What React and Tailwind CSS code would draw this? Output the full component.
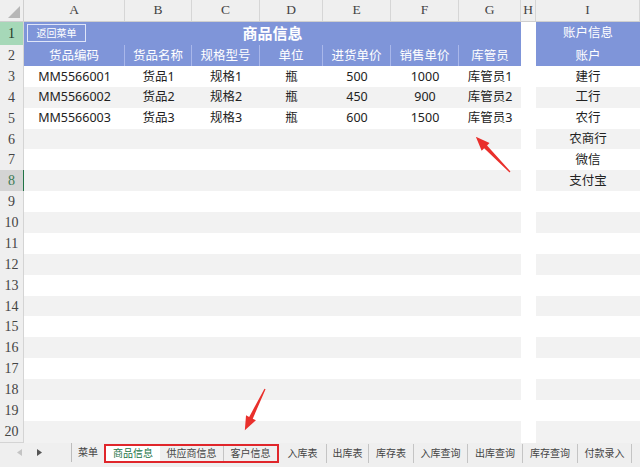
import React from 'react'

const cols = 'grid grid-cols-[24px_101px_67px_68px_63px_68px_68px_62px_15px_1fr]'
const cjk = { fontFamily: '"Noto Sans", "Noto Sans CJK SC", sans-serif' }
const serif = { fontFamily: '"Liberation Serif", "DejaVu Serif", serif' }

const letters = ['A', 'B', 'C', 'D', 'E', 'F', 'G', 'H', 'I']
const heads = ['货品编码', '货品名称', '规格型号', '单位', '进货单价', '销售单价', '库管员']
const goods = [
    ['MM5566001', '货品1', '规格1', '瓶', '500', '1000', '库管员1'],
    ['MM5566002', '货品2', '规格2', '瓶', '450', '900', '库管员2'],
    ['MM5566003', '货品3', '规格3', '瓶', '600', '1500', '库管员3'],
]
const accounts = ['建行', '工行', '农行', '农商行', '微信', '支付宝']

function RowHead({ n }) {
    let cls = 'bg-[#efefef] text-[#444] border-r border-[#d4d4d4]'
    if (n === 1) cls = 'bg-[#a6d8b8] text-[#1e3a28] border-r border-[#d4d4d4]'
    if (n === 8) cls = 'bg-[#d4d4d4] text-[#3d7a55] border-r border-r-[#217346]'
    return (
        <div className={`flex items-center justify-center border-b border-b-[#d4d4d4] text-[14px] ${cls}`} style={serif}>
            {n}
        </div>
    )
}

function Arrow({ x, y, angle, len }) {
    const h = len - 14
    return (
        <g transform={`translate(${x} ${y}) rotate(${angle})`}>
            <polygon points={`0,-0.6 ${h},-2 ${h},-5.5 ${len},0 ${h},5.5 ${h},2 0,0.6`} fill="#e9302c" />
        </g>
    )
}

const tabs = [
    ['入库表', 48], ['出库表', 42], ['库存表', 45], ['入库查询', 54],
    ['出库查询', 55], ['库存查询', 55], ['付款录入', 54],
]

export default function App() {
    const rows = []
    for (let n = 3; n <= 20; n++) {
        const i = n - 3
        const band = n % 2 === 0 ? 'bg-[#f2f2f2]' : 'bg-white'
        const g = goods[i]
        rows.push(
            <div key={n} className={`${cols} h-[20.88px] text-[12.5px] text-[#222]`} style={cjk}>
                <RowHead n={n} />
                {Array.from({ length: 7 }).map((_, c) => (
                    <div key={c} className={`flex items-center justify-center ${band}`}>{g ? g[c] : ''}</div>
                ))}
                <div className="bg-white" />
                <div className={`flex items-center justify-center ${band}`}>{accounts[i] || ''}</div>
            </div>
        )
    }

    return (
        <div className="relative h-[467px] w-[640px] overflow-hidden bg-white select-none">
            {/* column letters */}
            <div className={`${cols} h-[22px] bg-[#efefef] border-b border-[#cfcfcf]`}>
                <div className="relative border-r border-[#cfcfcf]">
                    <svg className="absolute right-[3px] bottom-[3px]" width="12" height="12" viewBox="0 0 12 12">
                        <polygon points="12,0 12,12 0,12" fill="#b7b7b7" />
                    </svg>
                </div>
                {letters.map(l => (
                    <div key={l} className="flex items-center justify-center border-r border-[#d6d6d6] text-[13.5px] text-[#444]" style={serif}>{l}</div>
                ))}
            </div>

            {/* row 1 */}
            <div className={`${cols} h-[23px]`} style={cjk}>
                <RowHead n={1} />
                <div className="col-span-7 grid grid-cols-[1fr_auto_1fr] items-center bg-[#7f95d9] border-b border-[#93a6e0]">
                    <div className="pl-[3px]">
                        <div className="flex h-[18px] w-[59px] items-center justify-center border border-[#dfe5f8] text-[10px] text-white">返回菜单</div>
                    </div>
                    <div className="text-[15px] font-bold text-white">商品信息</div>
                    <div />
                </div>
                <div className="bg-white" />
                <div className="flex items-center justify-center bg-[#7f95d9] border-b border-[#93a6e0] text-[12.5px] text-white">账户信息</div>
            </div>

            {/* row 2 */}
            <div className={`${cols} h-[20.88px] text-[12.5px] text-white`} style={cjk}>
                <RowHead n={2} />
                {heads.map((h, c) => (
                    <div key={h} className={`flex items-center justify-center bg-[#7f95d9] ${c < 6 ? 'border-r border-[#a9b7ea]' : ''}`}>{h}</div>
                ))}
                <div className="bg-white" />
                <div className="flex items-center justify-center bg-[#7f95d9]">账户</div>
            </div>

            {rows}

            {/* sheet tabs */}
            <div className="flex h-[25.3px] items-start border-t border-[#c8c8c8] bg-[#efefef] text-[10px] text-[#444]" style={cjk}>
                <div className="flex h-[19px] w-[72px] items-center border-r border-[#bdbdbd] pl-[17px] gap-[15px]">
                    <svg width="5" height="7" viewBox="0 0 5 7"><polygon points="5,0 5,7 0,3.5" fill="#c4c4c4" /></svg>
                    <svg width="5" height="7" viewBox="0 0 5 7"><polygon points="0,0 0,7 5,3.5" fill="#555" /></svg>
                </div>
                <div className="flex h-[19px] w-[32px] items-center justify-center">菜单</div>
                <div className="flex h-[19px] border-2 border-[#e0262b] mt-[1px]">
                    <div className="flex w-[54px] items-center justify-center bg-white text-[#217346]">商品信息</div>
                    <div className="flex w-[64px] items-center justify-center border-r border-[#c4c4c4]">供应商信息</div>
                    <div className="flex w-[53px] items-center justify-center">客户信息</div>
                </div>
                {tabs.map(([t, w]) => (
                    <div key={t} className="flex h-[19px] items-center justify-center border-r border-[#c4c4c4] mt-[1px]" style={{ width: w }}>{t}</div>
                ))}
            </div>

            {/* annotation arrows */}
            <svg className="pointer-events-none absolute left-0 top-0" width="640" height="467">
                <Arrow x={510} y={172} angle={-134.2} len={49} />
                <Arrow x={265} y={389} angle={116} len={46} />
            </svg>
        </div>
    )
}
